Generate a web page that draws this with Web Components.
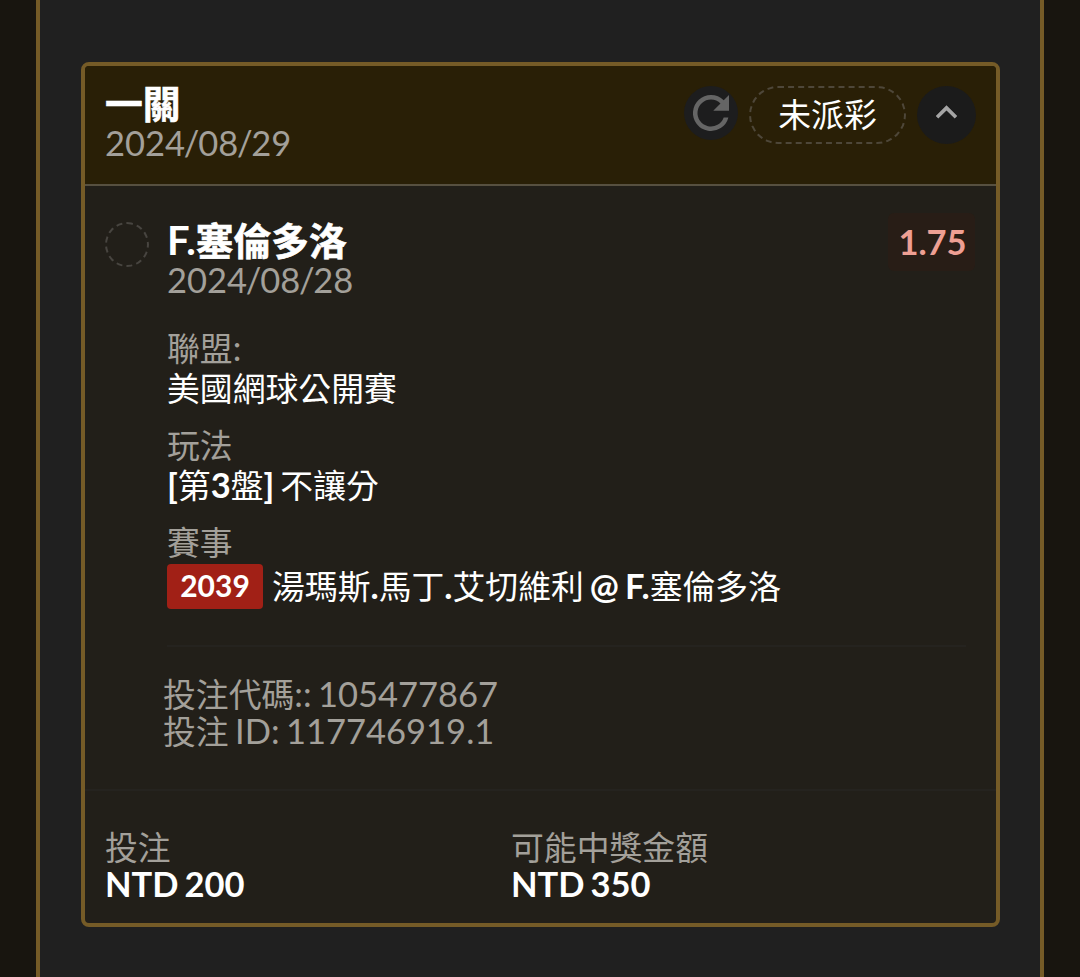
<!DOCTYPE html>
<html lang="zh-Hant">
<head>
<meta charset="utf-8">
<title>投注</title>
<style>
  * { box-sizing: border-box; }

  body {
    margin: 0;
    height: 977px;
    overflow: hidden;
    background: #18150f;
    color: #fff;
    font: 34.5px/38px Lato, "Noto Sans CJK TC", sans-serif;
    word-spacing: -2.4px;
    --gold: #755b27;
    --muted: #a3a09a;
  }
</style>
</head>
<body>

<bet-panel>
  <bet-card>
    <bet-header slot="header" name="一關" date="2024/08/29" status="未派彩"></bet-header>

    <bet-selection name="F.塞倫多洛" date="2024/08/28" odds="1.75">
      <bet-field label="聯盟:"><mixed-text strong text="美國網球公開賽"></mixed-text></bet-field>
      <bet-field label="玩法"><mixed-text strong text="[第3盤] 不讓分"></mixed-text></bet-field>
      <bet-field label="賽事">
        <match-row code="2039" text="湯瑪斯.馬丁.艾切維利 @ F.塞倫多洛"></match-row>
      </bet-field>
    </bet-selection>

    <bet-codes>
      <mixed-text text="投注代碼:: 105477867"></mixed-text>
      <mixed-text text="投注 ID: 117746919.1"></mixed-text>
    </bet-codes>

    <bet-totals slot="footer">
      <bet-total label="投注">NTD 200</bet-total>
      <bet-total label="可能中獎金額">NTD 350</bet-total>
    </bet-totals>
  </bet-card>
</bet-panel>

<script>
class BaseElement extends HTMLElement {
  connectedCallback() {
    if (this.shadowRoot) return;
    const shadow = this.attachShadow({ mode: 'open' });
    shadow.innerHTML = `
      <style>
        *, :host { box-sizing: border-box; }
      </style>
      ${this.render()}
    `;
  }

  attr(name) {
    return this.getAttribute(name) || '';
  }
}

// Chinese glyphs are set a little smaller than the Latin ones around them
class MixedText extends BaseElement {
  render() {
    const html = this.attr('text')
      .replace(/[\u3400-\u9fff]+/g, '<span>$&</span>')
      .replace(/(\d)\/(?=\d)/g, '$1<i>/</i>');
    return `
      <style>
        :host {
          display: block;
          white-space: nowrap;
        }

        :host([strong]) {
          font-weight: 700;
        }

        span {
          font-size: 0.952em;
          line-height: 0;
        }

        :host([strong]) span {
          font-weight: 400;
        }

        :host([heading]) {
          margin-bottom: 2px;
          font-size: 40px;
          font-weight: 700;
        }

        :host([heading]) span {
          font-size: 0.945em;
          -webkit-text-stroke: 0.6px;
        }

        i {
          margin: 0 -1.25px;
          font-style: normal;
        }
      </style>
      <div>${html}</div>
    `;
  }
}

class BetPanel extends BaseElement {
  render() {
    return `
      <style>
        :host {
          display: block;
          height: 977px;
          margin: 0 36px;
          padding: 62px 40px 0 41px;
          background: #202020;
          border: solid var(--gold);
          border-width: 0 4px;
        }
      </style>
      <slot></slot>
    `;
  }
}

class BetCard extends BaseElement {
  render() {
    return `
      <style>
        :host {
          display: flex;
          flex-direction: column;
          height: 865px;
          border: 4px solid var(--gold);
          border-radius: 8px;
          background: #221f19;
          overflow: hidden;
        }

        .body {
          flex: 1;
        }
      </style>
      <slot name="header"></slot>
      <div class="body"><slot></slot></div>
      <slot name="footer"></slot>
    `;
  }
}

class BetHeader extends BaseElement {
  render() {
    return `
      <style>
        :host {
          display: flex;
          justify-content: space-between;
          height: 120px;
          padding: 18px 20px 0;
          background: #291f06;
          border-bottom: 2px solid #575040;
        }

        .date {
          color: var(--muted);
        }

        .actions {
          display: flex;
          align-items: flex-start;
          gap: 11px;
          padding-top: 2px;
        }

        .refresh {
          width: 54px;
          height: 54px;
          border-radius: 50%;
          background: #1d1d1e;
          fill: #656565;
        }

        .status {
          width: 157px;
          height: 58px;
        }

        .toggle {
          display: flex;
          justify-content: center;
          width: 59px;
          height: 58px;
          padding-top: 5px;
          border-radius: 50%;
          background: #1b1b1b;
          fill: #a5a5a5;
        }
      </style>
      <div>
        <mixed-text heading text="${this.attr('name')}"></mixed-text>
        <mixed-text class="date" text="${this.attr('date')}"></mixed-text>
      </div>
      <div class="actions">
        <svg class="refresh" viewBox="0 0 24 24">
          <path d="M17.65 6.35A7.96 7.96 0 0 0 12 4a8 8 0 1 0 7.73 10h-2.08A6 6 0 1 1 12 6c1.66 0 3.14.69 4.22 1.78L13 11h7V4z"/>
        </svg>
        <status-pill class="status">${this.attr('status')}</status-pill>
        <div class="toggle">
          <svg width="43" height="43" viewBox="0 0 24 24">
            <path d="M12 8l-6 6 1.41 1.41L12 10.83l4.59 4.58L18 14z"/>
          </svg>
        </div>
      </div>
    `;
  }
}

class StatusPill extends BaseElement {
  render() {
    return `
      <style>
        :host {
          display: flex;
          align-items: center;
          justify-content: center;
          border: 2px dashed #4e4739;
          border-radius: 29px;
          font-size: 32.8px;
        }
      </style>
      <slot></slot>
    `;
  }
}

class BetSelection extends BaseElement {
  render() {
    return `
      <style>
        :host {
          display: grid;
          grid-template-columns: 44px 1fr auto;
          column-gap: 18px;
          align-items: start;
          margin-right: 30px;
          padding: 35px 0 0 20px;
        }

        .mark {
          height: 45px;
          margin-top: 1px;
          border: 2px dashed #484540;
          border-radius: 50%;
        }

        .date {
          color: var(--muted);
        }

        .odds {
          width: 87px;
          height: 58px;
          margin: -8px -9px 0 0;
          padding-left: 2px;
          border-radius: 6px;
          background: #281d16;
          color: #ee9f93;
          font-weight: 700;
          line-height: 58px;
          text-align: center;
        }

        .fields {
          display: flex;
          grid-column: 2 / 4;
          flex-direction: column;
          gap: 19px;
          padding: 30px 0 36px;
          border-bottom: 2px solid #25231f;
        }
      </style>
      <div class="mark"></div>
      <div>
        <mixed-text heading text="${this.attr('name')}"></mixed-text>
        <mixed-text class="date" text="${this.attr('date')}"></mixed-text>
      </div>
      <div class="odds">${this.attr('odds')}</div>
      <div class="fields"><slot></slot></div>
    `;
  }
}

class BetField extends BaseElement {
  render() {
    return `
      <style>
        :host {
          display: block;
        }

        .label {
          margin-bottom: 2px;
          color: var(--muted);
        }
      </style>
      <mixed-text class="label" text="${this.attr('label')}"></mixed-text>
      <slot></slot>
    `;
  }
}

class MatchRow extends BaseElement {
  render() {
    return `
      <style>
        :host {
          display: flex;
          align-items: center;
          gap: 9px;
          padding-top: 1px;
        }

        .code {
          width: 96px;
          height: 45px;
          border-radius: 4px;
          background: #a12016;
          font-size: 30px;
          font-weight: 700;
          line-height: 43px;
          text-align: center;
        }

        .teams {
          margin-bottom: 2px;
        }
      </style>
      <div class="code">${this.attr('code')}</div>
      <mixed-text class="teams" strong text="${this.attr('text')}"></mixed-text>
    `;
  }
}

class BetCodes extends BaseElement {
  render() {
    return `
      <style>
        :host {
          display: block;
          padding: 28px 0 0 78px;
          color: var(--muted);
          line-height: 37px;
        }
      </style>
      <slot></slot>
    `;
  }
}

class BetTotals extends BaseElement {
  render() {
    return `
      <style>
        :host {
          display: grid;
          grid-template-columns: 406px 1fr;
          height: 134px;
          padding: 37px 20px 0;
          border-top: 2px solid #25231f;
        }
      </style>
      <slot></slot>
    `;
  }
}

class BetTotal extends BaseElement {
  render() {
    return `
      <style>
        :host {
          display: block;
          line-height: 37px;
        }

        .label {
          color: var(--muted);
        }

        .amount {
          font-weight: 700;
        }
      </style>
      <mixed-text class="label" text="${this.attr('label')}"></mixed-text>
      <div class="amount"><slot></slot></div>
    `;
  }
}

customElements.define('mixed-text', MixedText);
customElements.define('status-pill', StatusPill);
customElements.define('bet-panel', BetPanel);
customElements.define('bet-card', BetCard);
customElements.define('bet-header', BetHeader);
customElements.define('bet-selection', BetSelection);
customElements.define('bet-field', BetField);
customElements.define('match-row', MatchRow);
customElements.define('bet-codes', BetCodes);
customElements.define('bet-totals', BetTotals);
customElements.define('bet-total', BetTotal);
</script>
</body>
</html>
